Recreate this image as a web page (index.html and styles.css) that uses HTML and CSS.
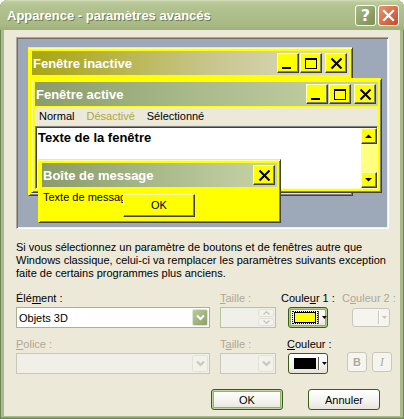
FILE: index.html
```html
<!DOCTYPE html>
<html lang="fr">
<head>
<meta charset="utf-8">
<title>Apparence - paramètres avancés</title>
<link rel="stylesheet" href="styles.css">
</head>
<body>
<div class="window">
  <div class="titlebar">
    <span class="title">Apparence - paramètres avancés</span>
    <div class="caption-btns">
      <span class="cap-btn help">?</span>
      <span class="cap-btn close"><svg width="13" height="13" viewBox="0 0 13 13"><path d="M2 2 L11 11 M11 2 L2 11" stroke="#fff" stroke-width="2.2" stroke-linecap="square"/></svg></span>
    </div>
  </div>
  <div class="client">
    <div class="preview">
      <div class="pw inactive">
        <div class="ptitle t-inactive">
          <span class="ptitle-text">Fenêtre inactive</span>
          <div class="pbtns">
            <span class="pbtn"><svg width="20" height="18" viewBox="0 0 20 18"><rect x="4" y="13" width="9" height="2"/></svg></span>
            <span class="pbtn"><svg width="20" height="18" viewBox="0 0 20 18"><rect x="4.5" y="4.5" width="11" height="10" fill="none" stroke="#000"/><rect x="4" y="4" width="12" height="2"/></svg></span>
            <span class="pbtn gap"><svg width="20" height="18" viewBox="0 0 20 18"><path d="M5.5 4.5 L15.5 14.5 M15.5 4.5 L5.5 14.5" stroke="#000" stroke-width="2"/></svg></span>
          </div>
        </div>
      </div>
      <div class="pw active">
        <div class="ptitle t-active">
          <span class="ptitle-text">Fenêtre active</span>
          <div class="pbtns">
            <span class="pbtn"><svg width="20" height="18" viewBox="0 0 20 18"><rect x="4" y="13" width="9" height="2"/></svg></span>
            <span class="pbtn"><svg width="20" height="18" viewBox="0 0 20 18"><rect x="4.5" y="4.5" width="11" height="10" fill="none" stroke="#000"/><rect x="4" y="4" width="12" height="2"/></svg></span>
            <span class="pbtn gap"><svg width="20" height="18" viewBox="0 0 20 18"><path d="M5.5 4.5 L15.5 14.5 M15.5 4.5 L5.5 14.5" stroke="#000" stroke-width="2"/></svg></span>
          </div>
        </div>
        <div class="pmenu">
          <span>Normal</span><span class="pdis">Désactivé</span><span>Sélectionné</span>
        </div>
        <div class="ptext">
          <div class="ptext-body">Texte de la fenêtre</div>
          <div class="pscroll">
            <span class="sbtn"><svg width="14" height="14" viewBox="0 0 14 14"><path d="M3 9 L10 9 L6.5 5.5 Z"/></svg></span>
            <span class="strack"></span>
            <span class="sbtn"><svg width="14" height="14" viewBox="0 0 14 14"><path d="M3 5 L10 5 L6.5 8.5 Z"/></svg></span>
          </div>
        </div>
      </div>
      <div class="pw msgbox">
        <div class="ptitle t-msg">
          <span class="ptitle-text">Boîte de message</span>
          <div class="pbtns">
            <span class="pbtn"><svg width="20" height="18" viewBox="0 0 20 18"><path d="M5.5 4.5 L15.5 14.5 M15.5 4.5 L5.5 14.5" stroke="#000" stroke-width="2"/></svg></span>
          </div>
        </div>
        <div class="msgbody">
          <span class="msgtext">Texte de message</span>
          <span class="pokbtn">OK</span>
        </div>
      </div>
    </div>

    <p class="info">Si vous sélectionnez un paramètre de boutons et de fenêtres autre que<br>Windows classique, celui-ci va remplacer les paramètres suivants exception<br>faite de certains programmes plus anciens.</p>

    <div class="controls">
      <div class="cell">
        <div class="lbl">Élé<u>m</u>ent :</div>
        <div class="ctl combo">
          <span class="combo-text">Objets 3D</span>
          <span class="dd-btn"><svg width="9" height="7" viewBox="0 0 9 7"><path d="M1 1.5 L4.5 5 L8 1.5" fill="none" stroke="#fff" stroke-width="2"/></svg></span>
        </div>
      </div>
      <div class="cell">
        <div class="lbl dis"><u>T</u>aille :</div>
        <div class="ctl spinner">
          <span class="spin-field"></span>
          <span class="spin-btns">
            <span class="spin-b"><svg width="7" height="4" viewBox="0 0 7 4"><path d="M0.5 3.5 L3.5 0.8 L6.5 3.5" fill="none" stroke="#C9C7BA" stroke-width="1.4"/></svg></span>
            <span class="spin-b"><svg width="7" height="4" viewBox="0 0 7 4"><path d="M0.5 0.5 L3.5 3.2 L6.5 0.5" fill="none" stroke="#C9C7BA" stroke-width="1.4"/></svg></span>
          </span>
        </div>
      </div>
      <div class="cell">
        <div class="lbl">Coule<u>u</u>r 1 :</div>
        <div class="ctl cbtn focus">
          <span class="focusring"><span class="swatch yellow"></span></span>
          <span class="sep"></span>
          <svg class="arrow" width="5" height="3" viewBox="0 0 5 3"><path d="M0 0 L5 0 L2.5 3 Z"/></svg>
        </div>
      </div>
      <div class="cell">
        <div class="lbl dis">C<u>o</u>uleur 2 :</div>
        <div class="ctl cbtn disabled c2">
          <span class="sep dsep"></span>
          <svg class="arrow" width="5" height="3" viewBox="0 0 5 3"><path d="M0 0 L5 0 L2.5 3 Z" fill="#C9C7BA"/></svg>
        </div>
      </div>

      <div class="cell">
        <div class="lbl dis"><u>P</u>olice :</div>
        <div class="ctl combo disabled">
          <span class="combo-text"></span>
          <span class="dd-btn dis-btn"><svg width="9" height="7" viewBox="0 0 9 7"><path d="M1 1.5 L4.5 5 L8 1.5" fill="none" stroke="#C9C7BA" stroke-width="2"/></svg></span>
        </div>
      </div>
      <div class="cell">
        <div class="lbl dis">T<u>a</u>ille :</div>
        <div class="ctl combo disabled small">
          <span class="combo-text"></span>
          <span class="dd-btn dis-btn"><svg width="9" height="7" viewBox="0 0 9 7"><path d="M1 1.5 L4.5 5 L8 1.5" fill="none" stroke="#C9C7BA" stroke-width="2"/></svg></span>
        </div>
      </div>
      <div class="cell">
        <div class="lbl lbl-c"><u>C</u>ouleur :</div>
        <div class="ctl cbtn">
          <span class="focusring plain"><span class="swatch black"></span></span>
          <span class="sep"></span>
          <svg class="arrow" width="5" height="3" viewBox="0 0 5 3"><path d="M0 0 L5 0 L2.5 3 Z"/></svg>
        </div>
      </div>
      <div class="cell">
        <div class="lbl"></div>
        <div class="ctl styles">
          <span class="sbox bold">B</span>
          <span class="sbox ital">I</span>
        </div>
      </div>
    </div>

    <div class="actions">
      <span class="btn default">OK</span>
      <span class="btn">Annuler</span>
    </div>
  </div>
</div>
</body>
</html>
```

FILE: styles.css
```css
* { box-sizing: border-box; }
html, body { margin: 0; padding: 0; }
body {
  width: 404px;
  height: 419px;
  overflow: hidden;
  background: #ffffff;
  font-family: "Liberation Sans", Arial, sans-serif;
  font-size: 11px;
  color: #000;
}

.window {
  width: 404px;
  height: 419px;
  display: flex;
  flex-direction: column;
  background: #A9BB8C;
  border-radius: 8px 8px 0 0;
  box-shadow: inset 1px 0 #6F8650, inset -1px 0 #6F8650, inset 0 -1px #6F8650, inset 0 -2px #8DA26C;
}

.titlebar {
  height: 30px;
  flex: none;
  display: flex;
  align-items: center;
  justify-content: space-between;
  padding: 0 5px 0 7px;
  border-radius: 7px 7px 0 0;
  background: linear-gradient(to bottom, #D3DDBA 0px, #BDCB9D 2px, #B3C391 6px, #AEBE8B 15px, #A8B984 25px, #9FB17B 30px);
}
.title {
  color: #fff;
  font-weight: bold;
  font-size: 13px;
  text-shadow: 1px 1px 0 #6E7E4E;
}
.caption-btns { display: flex; gap: 2px; }
.cap-btn {
  width: 21px;
  height: 21px;
  border: 1px solid #fff;
  border-radius: 3px;
  display: flex;
  align-items: center;
  justify-content: center;
  color: #fff;
  font-weight: bold;
  font-size: 16px;
  font-family: "DejaVu Sans", sans-serif;
}
.help { background: linear-gradient(135deg, #A8B98A, #7A8E57); }
.close { background: linear-gradient(135deg, #EB9470, #C64B27); }

.client {
  flex: 1;
  margin: 0 4px 3px;
  background: #ECE9D8;
  padding: 7px 11px 0 12px;
  display: flex;
  flex-direction: column;
}

/* ---------- preview ---------- */
.preview {
  position: relative;
  height: 192px;
  flex: none;
  background: #9DA9B8;
  border: 1px solid;
  border-color: #ACA899 #FFFFFF #FFFFFF #ACA899;
  box-shadow: inset 1px 1px #716F64, inset -1px -1px #F1EFE2;
  overflow: hidden;
}
.pw {
  position: absolute;
  background: #FFFF00;
  border: 1px solid;
  border-color: #FFFF00 #404040 #404040 #FFFF00;
  box-shadow: inset 1px 1px #FFFF99, inset -1px -1px #808080;
  padding: 3px;
  display: flex;
  flex-direction: column;
}
.inactive { left: 11px; top: 9px; width: 325px; height: 149px; }
.active { left: 14px; top: 40px; width: 351px; height: 115px; }
.msgbox { left: 21px; top: 121px; width: 243px; height: 64px; }

.ptitle {
  height: 24px;
  flex: none;
  display: flex;
  align-items: center;
  justify-content: space-between;
  margin-bottom: 1px;
  padding-left: 1px;
}
.ptitle-text {
  color: #fff;
  font-weight: bold;
  font-size: 13px;
}
.t-inactive { background: linear-gradient(to right, #A9A512 0%, #C7C58A 55%, #DFDECB 100%); }
.t-active { background: linear-gradient(to right, #8B9C6A 0%, #A9B98A 45%, #C8D4A8 100%); }
.t-msg { background: linear-gradient(to right, #8A9A68 0%, #AABA8B 50%, #C8D4A8 100%); }

.pbtns { display: flex; gap: 1px; margin-right: 2px; }
.pbtn {
  width: 22px;
  height: 20px;
  background: #FFFF00;
  border: 1px solid;
  border-color: #FFFFC0 #404040 #404040 #FFFFC0;
  box-shadow: inset -1px -1px #808080;
  display: block;
}
.pbtn svg { display: block; }
.pbtn.gap { margin-left: 2px; }

.pmenu {
  height: 18px;
  flex: none;
  background: #ECE9D8;
  display: flex;
  align-items: center;
  gap: 12px;
  padding-left: 4px;
  margin-bottom: 1px;
}
.pdis { color: #ACA83A; }

.ptext {
  flex: 1;
  display: flex;
  background: #fff;
  border: 1px solid;
  border-color: #808080 #FFFFB0 #FFFFB0 #808080;
  box-shadow: inset 1px 1px #404040;
}
.ptext-body {
  flex: 1;
  padding: 3px 0 0 2px;
  font-weight: bold;
  font-size: 13px;
  line-height: 16px;
}
.pscroll {
  width: 16px;
  display: flex;
  flex-direction: column;
  margin: 1px 0 0 0;
  background: #FFFF80;
}
.sbtn {
  width: 16px;
  height: 16px;
  background: #FFFF00;
  border: 1px solid;
  border-color: #FFFFC0 #404040 #404040 #FFFFC0;
  box-shadow: inset -1px -1px #808080;
  display: block;
}
.sbtn svg { display: block; }
.strack { flex: 1; }

.msgbody {
  flex: 1;
  position: relative;
  padding: 3px 0 0 1px;
  line-height: 13px;
}
.pokbtn {
  position: absolute;
  left: 81px;
  top: 6px;
  width: 72px;
  height: 23px;
  background: #FFFF00;
  border: 1px solid;
  border-color: #FFFFC0 #404040 #404040 #FFFFC0;
  box-shadow: inset -1px -1px #808080;
  display: flex;
  align-items: center;
  justify-content: center;
}

/* ---------- info ---------- */
.info {
  margin: 12px 0 0;
  line-height: 13px;
  white-space: nowrap;
}

/* ---------- controls ---------- */
.controls {
  margin-top: 12px;
  display: grid;
  grid-template-columns: 204px 61px 61px 50px;
  row-gap: 10px;
}
.lbl {
  height: 13px;
  line-height: 13px;
  white-space: nowrap;
}
.lbl.dis { color: #ACA899; }
.lbl-c { margin-left: 6px; }
.ctl { margin-top: 2px; }

.combo {
  width: 194px;
  height: 21px;
  border: 1px solid #A9B18F;
  background: #fff;
  display: flex;
  align-items: center;
  padding: 0 1px 0 2px;
}
.combo-text { flex: 1; }
.combo.small { width: 56px; }
.combo.disabled { border-color: #C9C7BA; background: #F1F0E8; }
.dd-btn {
  width: 16px;
  height: 17px;
  border: 1px solid #DDE6CF;
  border-radius: 2px;
  background: linear-gradient(135deg, #BACA9C, #8BA167);
  display: flex;
  align-items: center;
  justify-content: center;
}
.dd-btn.dis-btn { background: #F2F1EA; border-color: #E4E2D6; }

.spinner {
  width: 56px;
  height: 21px;
  border: 1px solid #B7C2A0;
  background: #F1F0E8;
  display: flex;
  padding: 1px;
}
.spin-field { flex: 1; }
.spin-btns { width: 16px; display: flex; flex-direction: column; gap: 1px; }
.spin-b {
  flex: 1;
  border: 1px solid #E4E2D6;
  border-radius: 2px;
  background: #F3F2EC;
  display: flex;
  align-items: center;
  justify-content: center;
}

.cbtn {
  width: 40px;
  height: 21px;
  margin-left: 7px;
  border: 1px solid #3D5A1E;
  border-radius: 3px;
  background: linear-gradient(to bottom, #FFFFFF, #F1F0EA 70%, #E3E1D6);
  display: flex;
  align-items: center;
  padding-left: 3px;
}
.cbtn.focus { box-shadow: inset 0 0 0 1px #B5CB8E, inset 0 0 0 2px #8FAF5E; }
.focusring {
  width: 27px;
  height: 13px;
  outline: 1px dotted #000;
  outline-offset: -1px;
  display: flex;
  align-items: center;
  justify-content: center;
}
.focusring.plain { outline: none; }
.swatch {
  width: 22px;
  height: 11px;
  border: 1px solid #000;
}
.swatch.yellow { background: #FFFF00; }
.swatch.black { background: #000; }
.sep {
  width: 2px;
  height: 13px;
  border-left: 1px solid #5A5A50;
  border-right: 1px solid #fff;
}
.arrow { margin-left: 2px; display: block; }
.cbtn.disabled {
  border-color: #C9C7BA;
  background: #F5F4EE;
  box-shadow: none;
  width: 38px;
  height: 19px;
  margin: 3px 0 0 10px;
  padding-left: 25px;
}
.dsep { border-left-color: #C9C7BA; }

.styles { display: flex; gap: 5px; margin-left: 5px; margin-top: 1px; }
.sbox {
  width: 20px;
  height: 20px;
  border: 1px solid #C9C7BA;
  border-radius: 3px;
  background: #F5F4EE;
  color: #ACA899;
  text-shadow: 1px 1px 0 #fff;
  display: flex;
  align-items: center;
  justify-content: center;
}
.sbox.bold { font-weight: bold; font-size: 11px; }
.sbox.ital { font-style: italic; font-family: "Liberation Serif", serif; font-size: 12px; }

/* ---------- actions ---------- */
.actions {
  margin-top: 15px;
  display: flex;
  justify-content: flex-end;
  gap: 25px;
  padding-right: 9px;
}
.btn {
  width: 72px;
  height: 21px;
  border: 1px solid #3D5A1E;
  border-radius: 3px;
  background: linear-gradient(to bottom, #FFFFFF, #F4F3EE 60%, #E5E3D9);
  display: flex;
  align-items: center;
  justify-content: center;
}
.btn.default { box-shadow: inset 0 0 0 1px #C2D5A0, inset 0 0 0 2px #94B364; }
```
